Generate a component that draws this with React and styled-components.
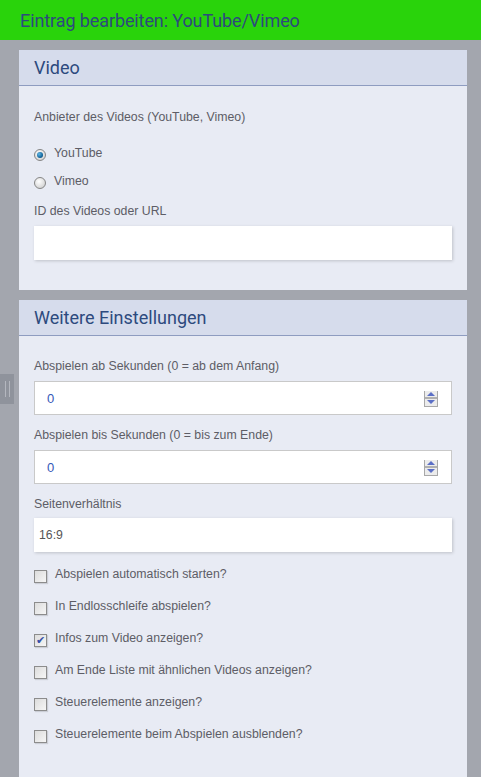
import React from 'react';
import styled, { createGlobalStyle } from 'styled-components';

const GlobalStyle = createGlobalStyle`
  html, body {
    margin: 0;
    padding: 0;
    background: #a3a6ae;
  }
  body {
    font-family: "Liberation Sans", Arial, sans-serif;
  }
`;

const Page = styled.div`
  min-height: 777px;
  background: #a3a6ae;
  position: relative;
`;

const TopBar = styled.div`
  height: 40px;
  background: #29d30b;
  display: flex;
  align-items: center;
  padding-left: 20px;
  font-family: Roboto, "Open Sans", sans-serif;
  font-size: 18px;
  letter-spacing: -0.1px;
  color: #2d4a7e;
`;

const Content = styled.div`
  padding: 10px 14px 0 19px;
  display: flex;
  flex-direction: column;
  gap: 10px;
`;

const Panel = styled.section`
  background: #e8ebf4;
  padding-bottom: ${(p) => p.$bottom || 0}px;
`;

const PanelHead = styled.div`
  height: 36px;
  box-sizing: border-box;
  background: #d6dcec;
  border-bottom: 1px solid #8e9cc0;
  display: flex;
  align-items: center;
  padding-left: 15px;
  font-family: Roboto, "Open Sans", sans-serif;
  font-size: 18px;
  color: #2d4a7e;
`;

const PanelBody = styled.div`
  padding: ${(p) => p.$top}px 15px 0 15px;
`;

const Label = styled.div`
  font-size: 12.3px;
  color: #5d5d66;
  height: 15px;
  line-height: 15px;
  margin-bottom: ${(p) => p.$gap || 0}px;
`;

const Choice = styled.label`
  display: flex;
  align-items: center;
  gap: 8px;
  height: 16px;
  font-size: 12.3px;
  color: #5d5d66;
  margin-bottom: ${(p) => p.$gap || 0}px;
`;

const Radio = styled.span`
  width: 12px;
  height: 12px;
  box-sizing: border-box;
  border-radius: 50%;
  border: 1px solid #858585;
  background: radial-gradient(circle at 40% 35%, #ffffff, #d8d8d8 70%, #bdbdbd);
  display: flex;
  align-items: center;
  justify-content: center;
  margin-top: 3px;
  &::after {
    content: '';
    display: ${(p) => (p.$on ? 'block' : 'none')};
    width: 6px;
    height: 6px;
    border-radius: 50%;
    background: radial-gradient(circle at 35% 35%, #5fb6e6, #0b5c92 70%, #07304e);
  }
`;

const Box = styled.span`
  width: 13px;
  height: 13px;
  box-sizing: border-box;
  border: 1px solid #8c8c8c;
  background: linear-gradient(135deg, #dcdcdc, #f6f6f6);
  box-shadow: 1px 1px 1px rgba(0, 0, 0, 0.12);
  margin-top: 5px;
  display: flex;
  align-items: center;
  justify-content: center;
  color: #3550a8;
  font-size: 11px;
  line-height: 1;
`;

const TextInput = styled.div`
  height: 34px;
  box-sizing: border-box;
  background: #fff;
  box-shadow: 1px 1px 3px rgba(0, 0, 0, 0.18);
  display: flex;
  align-items: center;
  padding-left: 5px;
  font-size: 12.3px;
  color: #555;
  margin-bottom: ${(p) => p.$gap || 0}px;
`;

const NumberInput = styled.div`
  height: 34px;
  box-sizing: border-box;
  background: #fff;
  border: 1px solid #c9c9c9;
  display: flex;
  align-items: center;
  justify-content: space-between;
  padding: 0 13px 0 12px;
  font-size: 13px;
  color: #3558b8;
  margin-bottom: ${(p) => p.$gap || 0}px;
`;

const Spinner = styled.div`
  width: 14px;
  height: 16px;
  border: 1px solid #a8a8a8;
  border-top: none;
  box-sizing: border-box;
  display: flex;
  flex-direction: column;
  margin-top: 1px;
`;

const SpinHalf = styled.div`
  flex: 1;
  background: #ececec;
  display: flex;
  align-items: center;
  justify-content: center;
  & + & {
    border-top: 2px solid #b0b0b0;
  }
`;

const Arrow = styled.span`
  width: 0;
  height: 0;
  border-left: 4px solid transparent;
  border-right: 4px solid transparent;
  ${(p) =>
    p.$up
      ? 'border-bottom: 4px solid #5b6fc6;'
      : 'border-top: 4px solid #5b6fc6;'}
`;

const Handle = styled.div`
  position: absolute;
  left: 0;
  top: 374px;
  width: 14px;
  height: 30px;
  background: #8f939c;
  display: flex;
  justify-content: center;
  gap: 3px;
  padding-top: 7px;
  box-sizing: border-box;
  &::before,
  &::after {
    content: '';
    width: 1px;
    height: 16px;
    background: #b4b7bf;
  }
`;

const checks = [
  ['Abspielen automatisch starten?', false],
  ['In Endlosschleife abspielen?', false],
  ['Infos zum Video anzeigen?', true],
  ['Am Ende Liste mit ähnlichen Videos anzeigen?', false],
  ['Steuerelemente anzeigen?', false],
  ['Steuerelemente beim Abspielen ausblenden?', false],
];

function Stepper() {
  return (
    <Spinner>
      <SpinHalf>
        <Arrow $up />
      </SpinHalf>
      <SpinHalf>
        <Arrow />
      </SpinHalf>
    </Spinner>
  );
}

export default function App() {
  return (
    <Page>
      <GlobalStyle />
      <TopBar>Eintrag bearbeiten: YouTube/Vimeo</TopBar>
      <Handle />
      <Content>
        <Panel $bottom={30}>
          <PanelHead>Video</PanelHead>
          <PanelBody $top={24}>
            <Label $gap={20}>Anbieter des Videos (YouTube, Vimeo)</Label>
            <Choice $gap={12}>
              <Radio $on />
              YouTube
            </Choice>
            <Choice $gap={15}>
              <Radio />
              Vimeo
            </Choice>
            <Label $gap={7}>ID des Videos oder URL</Label>
            <TextInput />
          </PanelBody>
        </Panel>
        <Panel $bottom={40}>
          <PanelHead>Weitere Einstellungen</PanelHead>
          <PanelBody $top={23}>
            <Label $gap={7}>Abspielen ab Sekunden (0 = ab dem Anfang)</Label>
            <NumberInput $gap={13}>
              0
              <Stepper />
            </NumberInput>
            <Label $gap={7}>Abspielen bis Sekunden (0 = bis zum Ende)</Label>
            <NumberInput $gap={13}>
              0
              <Stepper />
            </NumberInput>
            <Label $gap={6}>Seitenverhältnis</Label>
            <TextInput $gap={14}>16:9</TextInput>
            {checks.map(([text, on]) => (
              <Choice key={text} $gap={16}>
                <Box>{on ? '✔' : ''}</Box>
                {text}
              </Choice>
            ))}
          </PanelBody>
        </Panel>
      </Content>
    </Page>
  );
}
